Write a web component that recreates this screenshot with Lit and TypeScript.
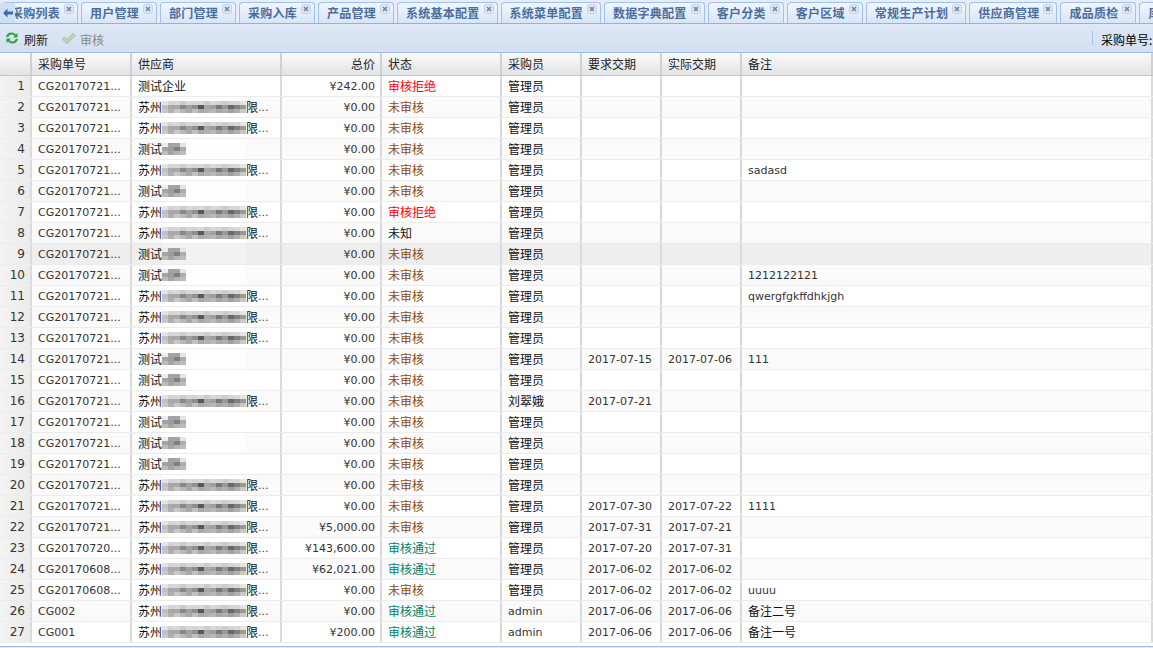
import { LitElement, html, css } from "lit";
import { customElement } from "lit/decorators.js";

const TABS = ["采购列表","用户管理","部门管理","采购入库","产品管理","系统基本配置","系统菜单配置","数据字典配置","客户分类","客户区域","常规生产计划","供应商管理","成品质检","库存"];
const HEAD: [string, string][] = [["", ""],["采购单号",""],["供应商",""],["总价","r"],["状态",""],["采购员",""],["要求交期",""],["实际交期",""],["备注",""]];
const A = "CG20170721...";
type Row = [string, "s"|"t"|"f", string, string, string, string, string, string];
const NO = "未审核", RJ = "审核拒绝", OK = "审核通过", M = "管理员";
const ROWS: Row[] = [
 [A,"f","¥242.00",RJ,M,"","",""],
 [A,"s","¥0.00",NO,M,"","",""],
 [A,"s","¥0.00",NO,M,"","",""],
 [A,"t","¥0.00",NO,M,"","",""],
 [A,"s","¥0.00",NO,M,"","","sadasd"],
 [A,"t","¥0.00",NO,M,"","",""],
 [A,"s","¥0.00",RJ,M,"","",""],
 [A,"s","¥0.00","未知",M,"","",""],
 [A,"t","¥0.00",NO,M,"","",""],
 [A,"t","¥0.00",NO,M,"","","1212122121"],
 [A,"s","¥0.00",NO,M,"","","qwergfgkffdhkjgh"],
 [A,"s","¥0.00",NO,M,"","",""],
 [A,"s","¥0.00",NO,M,"","",""],
 [A,"t","¥0.00",NO,M,"2017-07-15","2017-07-06","111"],
 [A,"t","¥0.00",NO,M,"","",""],
 [A,"s","¥0.00",NO,"刘翠娥","2017-07-21","",""],
 [A,"t","¥0.00",NO,M,"","",""],
 [A,"t","¥0.00",NO,M,"","",""],
 [A,"t","¥0.00",NO,M,"","",""],
 [A,"s","¥0.00",NO,M,"","",""],
 [A,"s","¥0.00",NO,M,"2017-07-30","2017-07-22","1111"],
 [A,"s","¥5,000.00",NO,M,"2017-07-31","2017-07-21",""],
 ["CG20170720...","s","¥143,600.00",OK,M,"2017-07-20","2017-07-31",""],
 ["CG20170608...","s","¥62,021.00",OK,M,"2017-06-02","2017-06-02",""],
 ["CG20170608...","s","¥0.00",NO,M,"2017-06-02","2017-06-02","uuuu"],
 ["CG002","s","¥0.00",OK,"admin","2017-06-06","2017-06-06","备注二号"],
 ["CG001","s","¥200.00",OK,"admin","2017-06-06","2017-06-06","备注一号"],
];
const LONG = ["e4d4d8ccd8d4d8ccd8d4ccd4d8e4","c0a8a888a09058a8a07898688098","c8b0c8b8a8c0a8b0b8a8b0a0b0c8"];
const SHORT = ["eca4a4e4","a49c80ac","bca4b4bc"];
function cells(rows: string[]) {
  const out: string[] = [];
  rows.forEach(r => { for (let i = 0; i < r.length; i += 2) out.push("#" + r.slice(i, i + 2).repeat(3)); });
  return out;
}
const LC = cells(LONG), SC = cells(SHORT);

@customElement("app-root")
export class AppRoot extends LitElement {
  static styles = css`
    :host { display: block; width: 1153px; height: 648px; overflow: hidden; background: #dfe8f6;
      font: 11px "DejaVu Sans", "Noto Sans CJK SC", sans-serif; color: #333; }
    .page { display: flex; flex-direction: column; height: 648px; }
    .cjk { font-family: "Noto Sans CJK SC", sans-serif; font-size: 12px; }
    .tabsbar { position: relative; height: 24px; flex: none; box-sizing: border-box; border-bottom: 1px solid #8db2e3; background: #e4edf9; overflow: hidden; }
    .tabs { display: flex; gap: 3px; padding: 2px 0 0 2px; }
    .tab { flex: none; display: flex; align-items: flex-start; box-sizing: border-box; height: 21px; padding: 0 3px 0 8px;
      border: 1px solid #a3c0e8; border-bottom: none; border-radius: 4px 4px 0 0; background: linear-gradient(#f0f6fe, #d8e5f6); }
    .tab span { font: bold 12px/20px "Noto Sans CJK SC", sans-serif; letter-spacing: .25px; color: #4a6d9c; white-space: nowrap; }
    .close { flex: none; width: 10px; height: 10px; margin: 1px 0 0 4px; }
    .arrow { position: absolute; left: 0; top: 3px; width: 15px; height: 20px; background: #cfe0f5; display: flex; align-items: center; justify-content: center; }
    .toolbar { height: 29px; flex: none; box-sizing: border-box; display: flex; align-items: center; overflow: hidden; border-bottom: 1px solid #99bbe8; background: linear-gradient(#dde7f5, #d3e0f1); padding-left: 5px; }
    .toolbar .cjk { padding-top: 2px; }
    .btn { display: flex; align-items: center; gap: 5px; color: #222; }
    .btn.off { color: #888; margin-left: 13px; gap: 4px; }
    .spacer { flex: 1; }
    .sep { width: 1px; height: 14px; background: #a9c3e6; margin-right: 8px; }
    .search { color: #000; white-space: nowrap; width: 52px; flex: none; }
    .grid { flex: none; background: #fff; }
    .grid .cjk { padding-bottom: 2px; }
    .row { display: grid; grid-template-columns: 32px 100px 150px 100px 120px 80px 80px 80px 1fr; }
    .head { height: 23px; box-sizing: border-box; border-bottom: 1px solid #c5c5c5; background: linear-gradient(#fafafa, #e2e3e5); }
    .head > div { display: flex; align-items: center; padding: 0 6px; border-right: 2px solid #d0d0d0; color: #222; min-width: 0; box-sizing: border-box; }
    .head > div.r { justify-content: flex-end; padding-right: 5px; }
    .body .row { height: 21px; box-sizing: border-box; border-bottom: 1px solid #ececec; }
    .body .row.even { background: #fafafa; }
    .body .row.hover { background: #eeeeee; }
    .c { display: flex; align-items: center; padding: 0 6px; border-right: 2px solid #dadada; min-width: 0; box-sizing: border-box; white-space: nowrap; overflow: hidden; color: #333; }
    .c.r { justify-content: flex-end; padding-right: 5px; }
    .c.n { justify-content: flex-end; background: linear-gradient(90deg, #f3f3f3, #ebebeb); padding: 0 5px 0 0; border-right: 2px solid #dcdcdc; color: #333; font-size: 12px; }
    .sup { padding-right: 0; color: #111; overflow: visible; }
    .dots { font-size: 11px; color: #444; }
    .no { color: #8b4a10; } .rj { color: #f00; } .ok { color: #00806a; } .unk { color: #111; }
    .cn { color: #111; }
    .mosaic { flex: none; display: grid; align-content: center; width: 84px; height: 20px; background: #fff; grid-template-rows: repeat(3, 4px); grid-template-columns: repeat(14, 6px); }
    .mosaic.s { grid-template-columns: repeat(4, 6px); }
    .hover .mosaic { background: #f2f2f2; }
    .even .mosaic.s { background: #fdfdfd; }
    .foot { flex: none; height: 3px; background: #fff; }
    .rest { flex: 1; border-top: 1px solid #99bbe8; background: #dfe8f6; }
  `;

  mosaic(short: boolean) {
    const list = short ? SC : LC;
    return html`<div class="mosaic ${short ? "s" : ""}">${list.map(c => html`<i style="background:${c}"></i>`)}</div>`;
  }

  statusCls(s: string) { return s === NO ? "no" : s === RJ ? "rj" : s === OK ? "ok" : "unk"; }

  renderSup(k: string) {
    if (k === "f") return html`<span class="cjk cn">测试企业</span>`;
    if (k === "t") return html`<span class="cjk cn">测试</span>${this.mosaic(true)}`;
    return html`<span class="cjk cn">苏州</span>${this.mosaic(false)}<span class="cjk cn">限</span><span class="dots">...</span>`;
  }

  txt(v: string) { return /[\u4e00-\u9fff]/.test(v) ? html`<span class="cjk cn">${v}</span>` : v; }

  render() {
    return html`<div class="page">
      <div class="tabsbar">
        <div class="tabs">
          ${TABS.map(t => html`<div class="tab"><span>${t}</span>
            <svg class="close" viewBox="0 0 10 10"><rect x=".5" y=".5" width="9" height="9" rx="2" fill="#dce6f4" stroke="#c3d2e8"/><path d="M3 3l4 4M7 3l-4 4" stroke="#7486a3" stroke-width="1.6"/></svg>
          </div>`)}
        </div>
        <div class="arrow"><svg width="10" height="10" viewBox="0 0 10 10"><path d="M0 5l4.5-4.5v3H10v3H4.5v3z" fill="#3f6da8"/></svg></div>
      </div>
      <div class="toolbar">
        <div class="btn">
          <svg width="14" height="14" viewBox="0 0 14 14"><path d="M1 6C1.5 2.8 4 1.5 6.5 1.5c2 0 3.4.8 4.4 2L12.5 2v4.5H8l1.6-1.6C9 4 7.9 3.6 6.8 3.6 5 3.6 3.7 4.6 3.3 6z M13 8c-.5 3.2-3 4.5-5.5 4.5-2 0-3.4-.8-4.4-2L1.5 12V7.5H6l-1.6 1.6c.6.9 1.7 1.3 2.8 1.3 1.8 0 3.1-1 3.5-2.4z" fill="#2fa52f"/></svg>
          <span class="cjk">刷新</span>
        </div>
        <div class="btn off">
          <svg width="15" height="13" viewBox="0 0 15 13"><path d="M1 7l2.5-2.5L6 7l6-6 2.5 2.5L6 12z" fill="#b4d2b4" stroke="#a5c0a5" stroke-width=".6"/></svg>
          <span class="cjk">审核</span>
        </div>
        <div class="spacer"></div>
        <div class="sep"></div>
        <div class="search cjk">采购单号:</div>
      </div>
      <div class="grid">
        <div class="row head">${HEAD.map(([h, a]) => html`<div class="${a} cjk">${h}</div>`)}</div>
        <div class="body">
          ${ROWS.map((r, i) => html`<div class="row ${i % 2 ? "even" : ""} ${i === 8 ? "hover" : ""}">
            <div class="c n">${i + 1}</div>
            <div class="c">${r[0]}</div>
            <div class="c sup">${this.renderSup(r[1])}</div>
            <div class="c r">${r[2]}</div>
            <div class="c"><span class="cjk ${this.statusCls(r[3])}">${r[3]}</span></div>
            <div class="c">${this.txt(r[4])}</div>
            <div class="c">${r[5]}</div>
            <div class="c">${r[6]}</div>
            <div class="c">${this.txt(r[7])}</div>
          </div>`)}
        </div>
        <div class="foot"></div>
      </div>
      <div class="rest"></div>
    </div>`;
  }
}
